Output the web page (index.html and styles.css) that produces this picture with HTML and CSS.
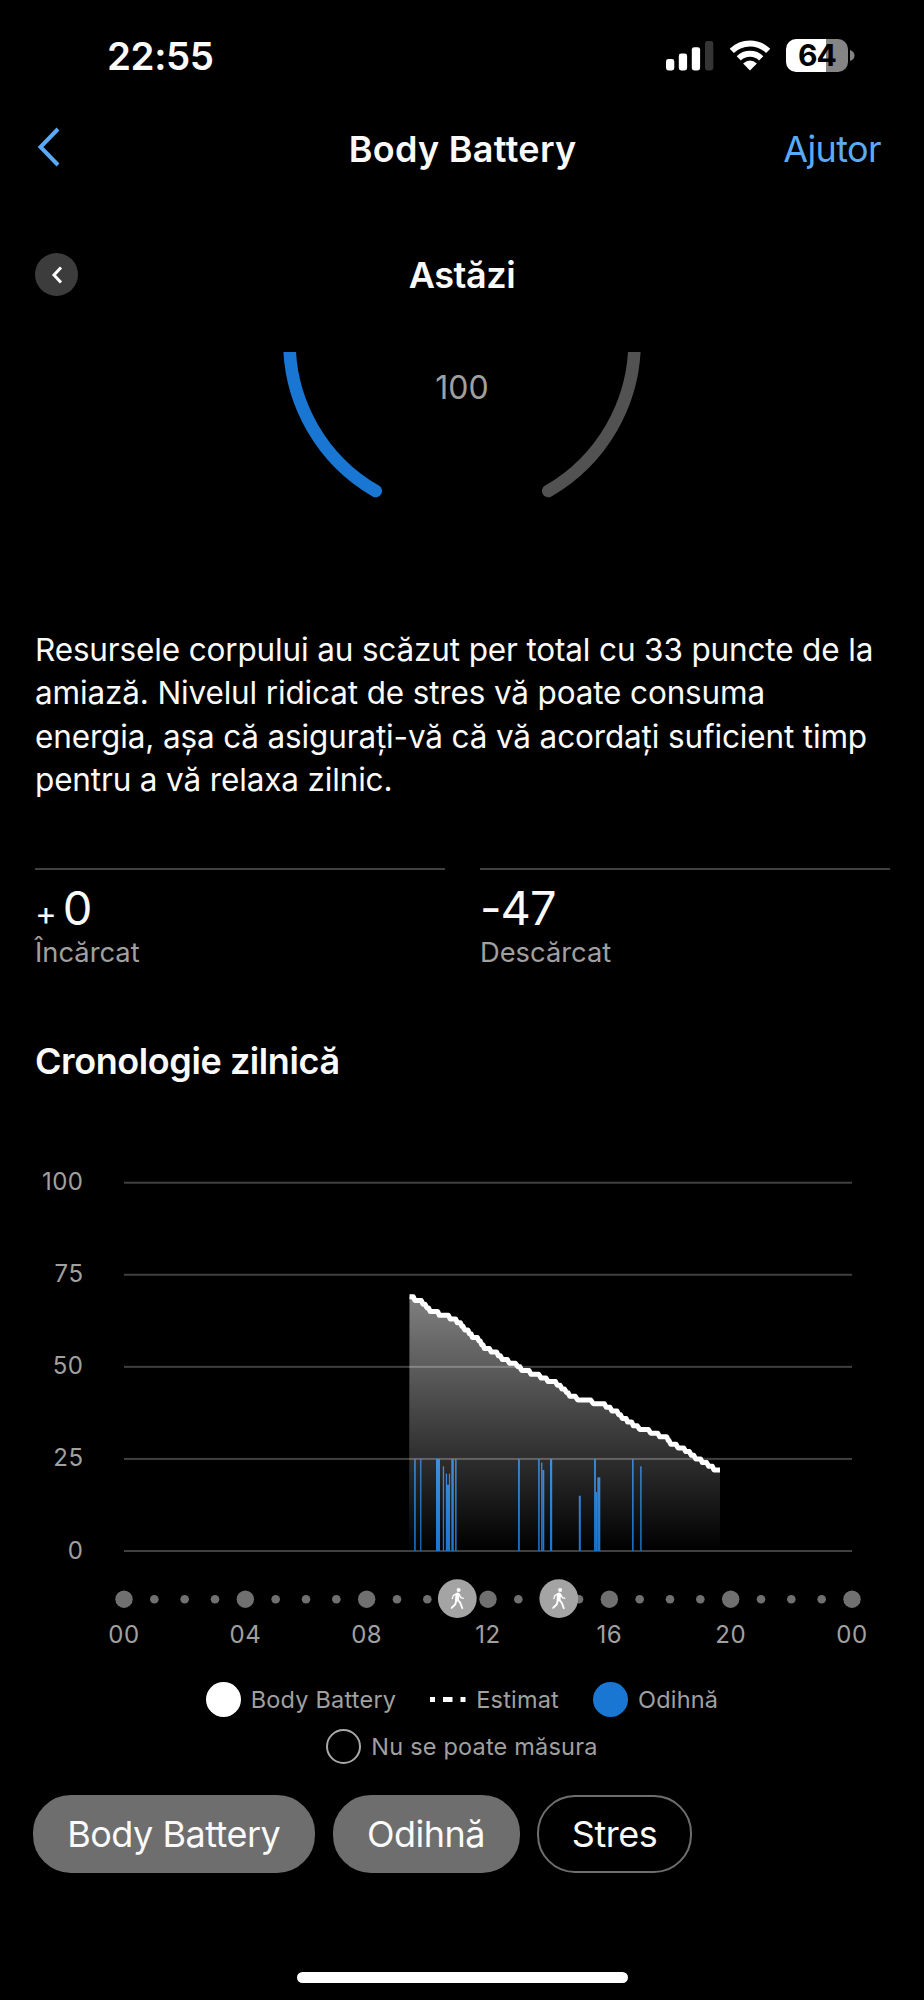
FILE: index.html
```html
<!DOCTYPE html>
<html lang="ro">
<head>
    <meta charset="UTF-8">
    <title>Body Battery</title>
    <link rel="stylesheet" href="styles.css">
</head>
<body>
    <div class="status-bar">
        <div class="time">22:55</div>
        <div class="status-icons">
            <svg class="signal" width="48" height="30" viewBox="0 0 48 30">
                <rect x="0" y="18" width="8.3" height="11.5" rx="2.4" fill="#fff"/>
                <rect x="12.8" y="12.5" width="8.3" height="17" rx="2.4" fill="#fff"/>
                <rect x="25.8" y="6.2" width="8.3" height="23.3" rx="2.4" fill="#fff"/>
                <rect x="39" y="0" width="8.3" height="29.5" rx="2.4" fill="#353535"/>
            </svg>
            <svg class="wifi" width="42" height="31" viewBox="0 0 42 31">
                <path d="M2.8 10.9A26 26 0 0 1 39.2 10.9M9.8 18.3A16 16 0 0 1 32.2 18.3" fill="none" stroke="#fff" stroke-width="6"/>
                <path d="M21 30.4L14.1 23.6Q21 17.6 27.9 23.6Z" fill="#fff"/>
            </svg>
            <div class="battery"><span>64</span></div>
            <svg class="battery-cap" width="5" height="11" viewBox="0 0 5 11"><path d="M0 0Q4.5 1.5 4.5 5.5T0 11Z" fill="#858585"/></svg>
        </div>
    </div>

    <div class="nav">
        <svg class="back" width="24" height="40" viewBox="0 0 24 40"><path d="M21 2L3.5 20L21 38" fill="none" stroke="#5aaaf8" stroke-width="4"/></svg>
        <div class="title">Body Battery</div>
        <div class="help">Ajutor</div>
    </div>

    <div class="date-row">
        <div class="prev">
            <svg width="12" height="20" viewBox="0 0 12 20"><path d="M10 2.5L3 10L10 17.5" fill="none" stroke="#fff" stroke-width="3"/></svg>
        </div>
        <div class="date">Astăzi</div>
        <div class="spacer"></div>
    </div>

    <svg class="gauge" width="924" height="150" viewBox="0 352 924 150">
        <path d="M289.4 341.5A172.6 172.6 0 0 0 375.7 491" stroke="#1976d2"/>
        <path d="M634.6 341.5A172.6 172.6 0 0 1 548.3 491" stroke="#525252"/>
        <text class="gauge-max" x="462" y="399">100</text>
    </svg>

    <p class="summary">Resursele corpului au scăzut per total cu 33 puncte de la<br>amiază. Nivelul ridicat de stres vă poate consuma<br>energia, așa că asigurați-vă că vă acordați suficient timp<br>pentru a vă relaxa zilnic.</p>

    <div class="stats">
        <div class="stat">
            <div class="value"><small>+</small>0</div>
            <div class="label">Încărcat</div>
        </div>
        <div class="stat">
            <div class="value">-47</div>
            <div class="label">Descărcat</div>
        </div>
    </div>

    <h2 class="section-title">Cronologie zilnică</h2>

    <svg class="chart" width="924" height="577" viewBox="0 1083 924 577">
        <defs>
            <linearGradient id="fade" gradientUnits="userSpaceOnUse" x1="0" y1="1297" x2="0" y2="1551">
                <stop offset="0" stop-color="#fff" stop-opacity="0.5"/>
                <stop offset="1" stop-color="#fff" stop-opacity="0"/>
            </linearGradient>
            <g id="walk">
                <circle r="19.4" fill="#a4a4a4"/>
                <g transform="scale(0.333)" stroke="#fff" fill="none" stroke-linecap="round" stroke-linejoin="round">
                    <circle cx="4" cy="-26" r="6" fill="#fff" stroke="none"/>
                    <path d="M1 -12L-1 3" stroke-width="12"/>
                    <path d="M-3 -14L-12 -9L-15 0M6 -12L11 -3L18 -1" stroke-width="4"/>
                    <path d="M-3 5L-6 17L-17 28M1 3L9 13L15 29" stroke-width="5.5"/>
                </g>
            </g>
        </defs>
        <g id="grid"></g>
        <g id="rest" fill="#1976d2"></g>
        <path id="area" fill="url(#fade)"/>
        <path id="line" class="line"/>
        <g id="hours"></g>
        <use href="#walk" x="457.3" y="1598.6"/>
        <use href="#walk" x="558.8" y="1598.6"/>
    </svg>

    <div class="legend">
        <div class="legend-row">
            <div class="legend-item"><span class="dot white"></span>Body Battery</div>
            <div class="legend-item">
                <svg class="dash" width="36" height="5" viewBox="0 0 36 5"><path d="M0 0h5v5h-5zM13 0h9.5v5h-9.5zM30.5 0h5v5h-5z" fill="#fff"/></svg>Estimat
            </div>
            <div class="legend-item"><span class="dot blue"></span>Odihnă</div>
        </div>
        <div class="legend-row">
            <div class="legend-item"><span class="dot empty"></span>Nu se poate măsura</div>
        </div>
    </div>

    <div class="chips">
        <div class="chip active body">Body Battery</div>
        <div class="chip active">Odihnă</div>
        <div class="chip">Stres</div>
    </div>

    <div class="home-indicator"></div>

    <script src="chart.js"></script>
</body>
</html>
```
FILE: styles.css
```css
* {
    box-sizing: border-box;
}
body {
    margin: 0;
    width: 924px;
    height: 2000px;
    overflow: hidden;
    background: #000;
    color: #fafafa;
    font-family: Inter, "Liberation Sans", sans-serif;
}
svg {
    display: block;
}
.status-bar {
    display: flex;
    justify-content: space-between;
    align-items: center;
    height: 111px;
    padding: 0 69px 0 107px;
}
.time {
    font-size: 38.5px;
    font-weight: 600;
    letter-spacing: -0.4px;
}
.status-icons {
    display: flex;
    align-items: center;
}
.wifi {
    margin-left: 15px;
}
.battery {
    width: 62px;
    height: 33px;
    margin-left: 15px;
    border-radius: 10px;
    background: linear-gradient(to right, #fff 64%, #858585 64%);
    color: #000;
    font-size: 30px;
    font-weight: 700;
    line-height: 33px;
    text-align: center;
    letter-spacing: -0.8px;
}
.battery-cap {
    margin-left: 2px;
}
.nav {
    display: flex;
    justify-content: space-between;
    align-items: center;
    height: 76px;
    padding: 0 43px 0 37px;
    font-size: 36px;
}
.back {
    margin-right: 81px;
    margin-top: -5px;
}
.title {
    font-weight: 600;
    letter-spacing: 0.3px;
}
.help {
    color: #5aaaf8;
    letter-spacing: -0.6px;
}
.date-row {
    display: flex;
    justify-content: space-between;
    align-items: center;
    height: 87px;
    margin-top: 44px;
    padding: 0 35px;
}
.prev {
    display: flex;
    justify-content: center;
    align-items: center;
    width: 43px;
    height: 43px;
    border-radius: 50%;
    background: #3c3c3c;
}
.spacer {
    width: 43px;
}
.date {
    font-size: 36px;
    font-weight: 600;
    letter-spacing: -0.4px;
}
.gauge {
    margin-top: 34px;
}
.gauge path {
    fill: none;
    stroke-width: 12.6;
    stroke-linecap: round;
}
.gauge-max {
    fill: #a0a0a0;
    font-size: 32px;
    text-anchor: middle;
}
.summary {
    margin: 126px 0 0 35px;
    font-size: 31.5px;
    line-height: 43.3px;
    letter-spacing: -0.15px;
    white-space: nowrap;
}
.stats {
    display: flex;
    gap: 35px;
    margin-top: 67px;
    padding: 0 34px 0 35px;
}
.stat {
    flex: 1;
    padding-top: 14px;
    border-top: 2px solid #404040;
}
.value {
    height: 48px;
    font-size: 47px;
    line-height: 48px;
    letter-spacing: -1px;
}
.value small {
    margin-right: 7px;
    font-size: 33px;
}
.label {
    margin-top: 4px;
    color: #a0a0a0;
    font-size: 27.3px;
    line-height: 34px;
}
.section-title {
    margin: 69px 0 0 35px;
    font-size: 36px;
    font-weight: 600;
    line-height: 44px;
    letter-spacing: -0.42px;
}
.chart text {
    fill: #a0a0a0;
    font-size: 24px;
    letter-spacing: 0.5px;
}
.chart .line {
    fill: none;
    stroke: #fff;
    stroke-width: 5;
    stroke-linejoin: round;
}
.legend {
    padding-top: 22px;
    color: #a0a0a0;
    font-size: 23.5px;
    letter-spacing: 0.2px;
}
.legend-row {
    display: flex;
    justify-content: center;
    gap: 34px;
    height: 35px;
}
.legend-row + .legend-row {
    margin-top: 11.5px;
}
.legend-item {
    display: flex;
    align-items: center;
}
.dot {
    width: 35px;
    height: 35px;
    margin-right: 10px;
    border-radius: 50%;
}
.dot.white {
    background: #fff;
}
.dot.blue {
    background: #1976d2;
}
.dot.empty {
    border: 2px solid #a8a8a8;
}
.dash {
    margin-right: 10px;
}
.chips {
    display: flex;
    gap: 17.5px;
    margin: 31px 0 0 32.5px;
}
.chip {
    width: 155px;
    height: 78px;
    border: 2px solid #6e6e6e;
    border-radius: 38px;
    font-size: 36px;
    line-height: 74px;
    letter-spacing: -0.5px;
    text-align: center;
}
.chip.active {
    width: 187px;
    background: #6e6e6e;
}
.chip.body {
    width: 282.5px;
}
.home-indicator {
    width: 331px;
    height: 11px;
    margin: 99px auto 0;
    border-radius: 6px;
    background: #fff;
}
```
FILE: chart.js
```js
const LEFT = 124;
const RIGHT = 852;
const BOTTOM = 1551;
const HOUR = (RIGHT - LEFT) / 24;

function levelY(level) {
    return BOTTOM - level * 3.683;
}

// grid lines with the level at the left
let grid = '';
[100, 75, 50, 25, 0].forEach(level => {
    const y = levelY(level);
    grid += `<rect x="${LEFT}" y="${y - 1}" width="${RIGHT - LEFT}" height="2" fill="#404040"/>`;
    grid += `<text x="83.5" y="${y + 7.5}" text-anchor="end">${level}</text>`;
});
document.getElementById('grid').innerHTML = grid;

// body battery, from 69 down to 22: [start, end] of each level
const runs = [
    [409.5, 413.3], [415, 421.3], [423, 425], [427, 428.5], [430.3, 437.7], [439.3, 448.3],
    [450.3, 455.7], [457.3, 460.3], [462, 463], [464.7, 468], [469.3, 471], [472.3, 477.3],
    [479, 480.3], [481.7, 483], [484.3, 489.3], [491.3, 496.7], [498.3, 500.3], [502.3, 507.3],
    [509.3, 515.3], [518, 520], [521.7, 529], [531, 538.7], [541, 546], [548, 555.5],
    [557.3, 560], [562, 564.3], [566.7, 568], [569.7, 575.3], [577.7, 590.7], [593.3, 604.3],
    [606.3, 610], [612, 617], [618.7, 620.5], [622.3, 626], [627.7, 631.7], [633.3, 637.3],
    [639.7, 648.3], [650.7, 657.7], [659.7, 666.7], [668.3, 669], [670.7, 676], [678, 683.7],
    [685.7, 689.3], [691.3, 693.7], [695.7, 700.7], [702.3, 706.7], [708.7, 712.3], [714, 720]
];
const points = runs.map(([a, b], i) => `${a} ${levelY(69 - i)}L${b} ${levelY(69 - i)}`).join('L');
document.getElementById('line').setAttribute('d', 'M' + points);
document.getElementById('area').setAttribute('d', `M409 ${BOTTOM}L` + points + `L720 ${BOTTOM}Z`);

// rest: [x, width, level]
const rest = [
    [414.2, 1.5, 25], [420.2, 1.2, 25], [436, 4, 25], [442.8, 1.3, 23],
    [445.8, 1.3, 21], [447, 2, 18], [448.9, 1.2, 21], [451.3, 2.5, 25], [455.1, 1.5, 25],
    [518.1, 1.7, 25], [538.2, 1.5, 25], [541.1, 1.3, 24], [542.3, 2, 22], [550, 2.2, 25],
    [578.8, 2, 15], [594.1, 1.8, 25], [595.8, 1.6, 16], [597.3, 3, 20],
    [632.1, 1.5, 25], [640.2, 1.4, 23]
];
document.getElementById('rest').innerHTML = rest.map(([x, w, level]) =>
    `<rect x="${x}" y="${levelY(level)}" width="${w}" height="${BOTTOM - levelY(level)}"/>`
).join('');

// one dot per hour, a big one with its time every four hours
let hours = '';
for (let h = 0; h <= 24; h++) {
    const x = LEFT + h * HOUR;
    const big = h % 4 === 0;
    hours += `<circle cx="${x}" cy="1599.2" r="${big ? 8.7 : 4.3}" fill="#707070"/>`;
    if (big) {
        hours += `<text x="${x}" y="1643" text-anchor="middle">${String(h % 24).padStart(2, '0')}</text>`;
    }
}
document.getElementById('hours').innerHTML = hours;
```
